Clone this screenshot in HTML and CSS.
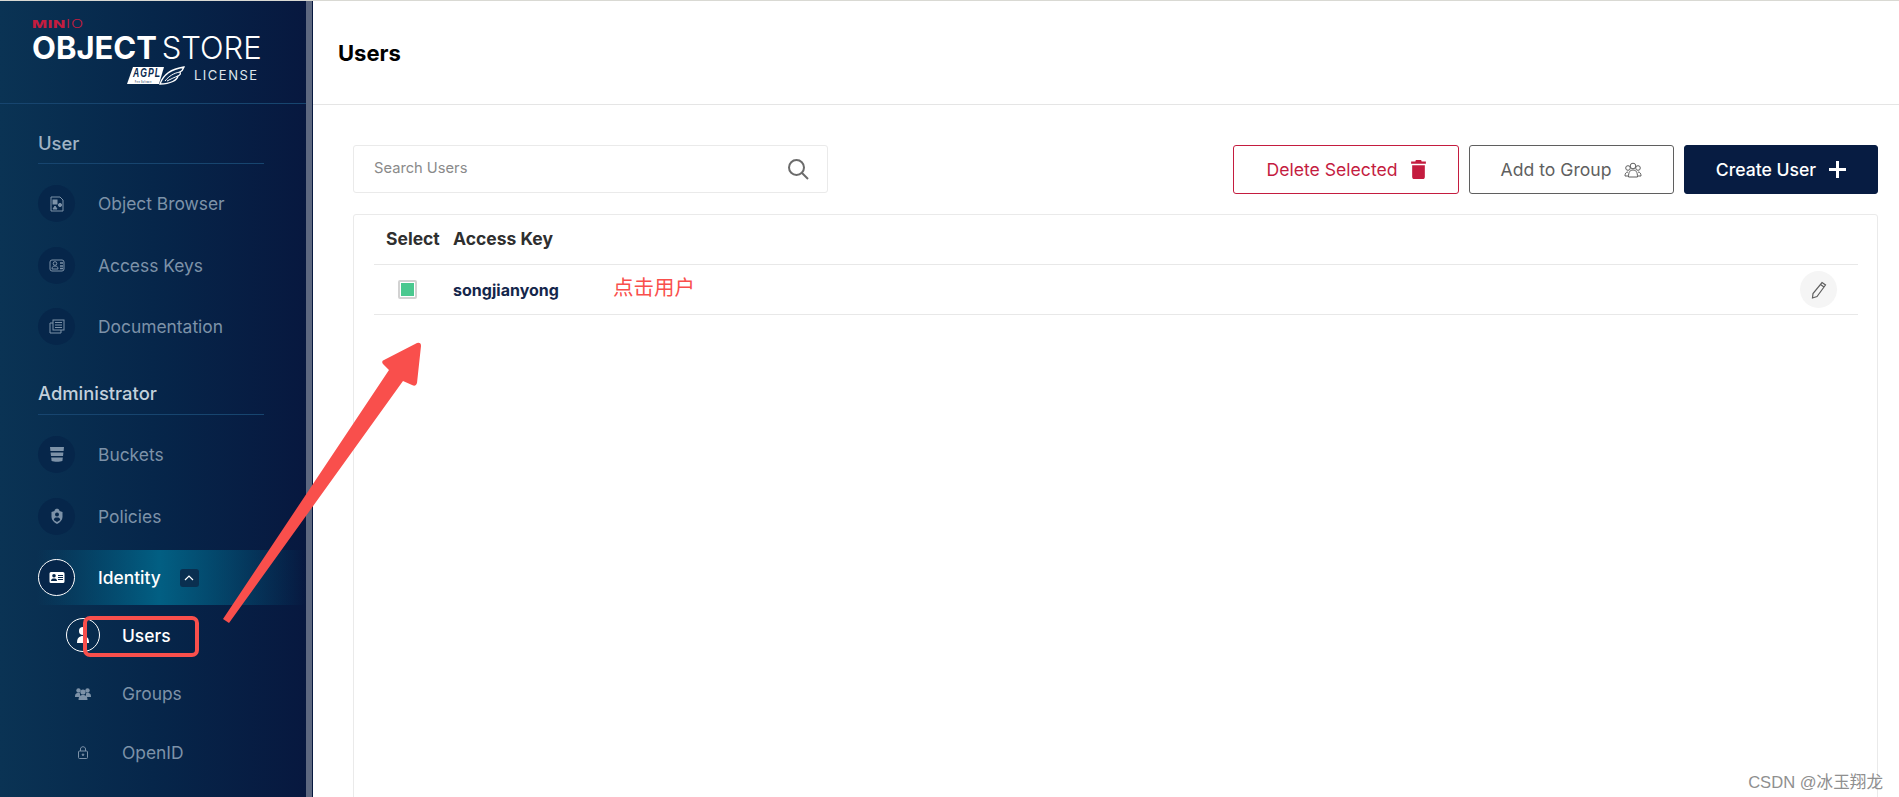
FILE: index.html
```html
<!DOCTYPE html>
<html lang="en">
<head>
    <meta charset="UTF-8">
    <meta name="viewport" content="width=device-width, initial-scale=1.0">
    <title>Users</title>
    <link rel="stylesheet" href="styles.css">
</head>
<body>
    <div class="app">
        <aside class="sidebar">
            <div class="logo">
                <div class="logo-minio"><b>MIN</b>IO</div>
                <div class="logo-name"><b>OBJECT</b> STORE</div>
                <div class="logo-license">
                    <svg class="agpl" width="58" height="19" viewBox="0 0 58 19">
                        <path d="M6 1H37L32 18H0Z" fill="#fff"/>
                        <text x="6" y="11" class="agpl-text" textLength="28" lengthAdjust="spacingAndGlyphs">AGPL</text>
                        <text x="8" y="16.500" class="agpl-small" textLength="17" lengthAdjust="spacingAndGlyphs">Free Software</text>
                        <path d="M33 18C36 9 44 3 57 1C56 4 55 5 53 6C54 8 53 9 51 10C50 14 44 18 33 18Z" fill="#0a2a50" stroke="#fff" stroke-width="1.300"/>
                        <path d="M38 15C42 10 47 7 53 6M40 15C44 13 48 11 51 10" fill="none" stroke="#fff"/>
                    </svg>
                    <span>LICENSE</span>
                </div>
            </div>

            <h3 class="nav-title dim">User</h3>
            <div class="nav-list">
                <a class="nav-item">
                    <span class="nav-icon">
                        <svg width="14" height="16" viewBox="0 0 14 16" fill="none" stroke="currentColor"><path d="M1 1H10L13 4V15H1Z"/><rect x="3" y="4" width="4" height="4" fill="currentColor"/><circle cx="10" cy="9" r="1.600" fill="currentColor"/><path d="M3 13L5 10L7 13Z" fill="currentColor"/></svg>
                    </span>
                    Object Browser
                </a>
                <a class="nav-item">
                    <span class="nav-icon">
                        <svg width="16" height="14" viewBox="0 0 16 14" fill="none" stroke="currentColor"><rect x="1" y="2" width="14" height="11" rx="2"/><circle cx="6" cy="5.500" r="1.800"/><path d="M3 11C3 9 4 8 6 8C8 8 9 9 9 11Z"/><path d="M11 5H14M11 8H14M11 10.500H14" stroke-width="1.400"/></svg>
                    </span>
                    Access Keys
                </a>
                <a class="nav-item">
                    <span class="nav-icon">
                        <svg width="16" height="15" viewBox="0 0 16 15" fill="none" stroke="currentColor"><rect x="4" y="1" width="11" height="10"/><path d="M6 3.500H13M6 6H13M6 8.500H13"/><path d="M4 4H1V14H12V11"/></svg>
                    </span>
                    Documentation
                </a>
            </div>

            <h3 class="nav-title">Administrator</h3>
            <div class="nav-list">
                <a class="nav-item">
                    <span class="nav-icon">
                        <svg width="16" height="15" viewBox="0 0 16 15" fill="currentColor"><path d="M1 0H15L14.600 4H1.400Z"/><path d="M1.600 5.500H14.400L14 9H2Z"/><path d="M2.200 10.500H13.800L13.400 14C11 15 5 15 2.600 14Z"/></svg>
                    </span>
                    Buckets
                </a>
                <a class="nav-item">
                    <span class="nav-icon">
                        <svg width="12" height="16" viewBox="0 0 12 16" fill="currentColor"><path d="M3.500 3C3.500 0 8.500 0 8.500 3L11.500 4V9C11.500 12 9 14.500 6 16C3 14.500 .5 12 .5 9V4Z"/><circle cx="6" cy="6.500" r="2" fill="#06264a"/><path d="M2.800 12C3 10 4 9.500 6 9.500C8 9.500 9 10 9.200 12L6 14Z" fill="#06264a"/></svg>
                    </span>
                    Policies
                </a>
                <a class="nav-item nav-active">
                    <span class="nav-icon">
                        <svg width="16" height="13" viewBox="0 0 16 13" fill="currentColor"><path fill-rule="evenodd" d="M2 1H14A1.500 1.500 0 0 1 15.500 2.500V10.500A1.500 1.500 0 0 1 14 12H2A1.500 1.500 0 0 1 .5 10.500V2.500A1.500 1.500 0 0 1 2 1ZM9 4V5H14V4ZM9 6V7H14V6ZM9 8V9H14V8Z"/><circle cx="5" cy="4.800" r="1.800" fill="#06264a"/><path d="M2 10C2 8 3.500 7.500 5 7.500C6.500 7.500 8 8 8 10Z" fill="#06264a"/></svg>
                    </span>
                    Identity
                    <span class="nav-toggle">
                        <svg width="10" height="6" viewBox="0 0 10 6" fill="none" stroke="#fff" stroke-width="1.200"><path d="M1 5L5 1L9 5"/></svg>
                    </span>
                </a>
            </div>
            <div class="sub-list">
                <a class="sub-item sub-active">
                    <span class="sub-icon">
                        <svg width="14" height="18" viewBox="0 0 14 18" fill="#fff"><circle cx="7" cy="5" r="4"/><path d="M1 17C1 12 3 10 7 10C11 10 13 12 13 17Z"/></svg>
                    </span>
                    Users
                </a>
                <a class="sub-item">
                    <span class="sub-icon">
                        <svg width="16" height="12" viewBox="0 0 16 12" fill="currentColor"><circle cx="3.500" cy="2.500" r="2.200"/><circle cx="12.500" cy="2.500" r="2.200"/><circle cx="8" cy="4" r="2.600"/><path d="M0 8C0 5.500 2 5 3.500 5C4.500 5 5 5.300 5 5.300V9H0Z"/><path d="M16 8C16 5.500 14 5 12.500 5C11.500 5 11 5.300 11 5.300V9H16Z"/><path d="M3.500 12C3.500 8 5.500 7 8 7C10.500 7 12.500 8 12.500 12Z"/></svg>
                    </span>
                    Groups
                </a>
                <a class="sub-item">
                    <span class="sub-icon">
                        <svg width="10" height="13" viewBox="0 0 10 13" fill="none" stroke="currentColor"><rect x=".5" y="5" width="9" height="7.500" rx="1"/><path d="M2.500 5V3C2.500 0 7.500 0 7.500 3V5"/><circle cx="5" cy="8.700" r=".8" fill="currentColor"/></svg>
                    </span>
                    OpenID
                </a>
            </div>
        </aside>
        <div class="scrollbar"></div>

        <main class="main">
            <header class="page-header">
                <h1>Users</h1>
            </header>
            <div class="content">
                <div class="toolbar">
                    <div class="search-box">
                        <span>Search Users</span>
                        <svg width="22" height="22" viewBox="0 0 22 22" fill="none" stroke="#6b6b6b" stroke-width="2"><circle cx="9.500" cy="9.500" r="7.500"/><path d="M15 15L21 21"/></svg>
                    </div>
                    <div class="actions">
                        <button class="btn btn-delete">Delete Selected
                            <svg width="15" height="19" viewBox="0 0 14 18" fill="#c41c3f"><path d="M4.500 0H9.500L10 1.500H14V3.500H0V1.500H4Z"/><path d="M1 5H13V16C13 17 12.300 18 11 18H3C1.700 18 1 17 1 16Z"/></svg>
                        </button>
                        <button class="btn btn-group">Add to Group
                            <svg width="18" height="16" viewBox="0 0 18 16" fill="none" stroke="#5f5f5f"><circle cx="9" cy="4" r="2.800"/><circle cx="4" cy="6" r="2.300"/><circle cx="14" cy="6" r="2.300"/><path d="M4.500 15C4.500 10 6 8 9 8C12 8 13.500 10 13.500 15Z"/><path d="M4 10C2 10 1 11.500 1 14H4M14 10C16 10 17 11.500 17 14H14"/></svg>
                        </button>
                        <button class="btn btn-create">Create User
                            <svg width="17" height="17" viewBox="0 0 17 17" fill="none" stroke="#fff" stroke-width="3"><path d="M8.500 0V17M0 8.500H17"/></svg>
                        </button>
                    </div>
                </div>

                <div class="table-box">
                    <div class="table-row table-head">
                        <div class="col-select">Select</div>
                        <div class="col-key">Access Key</div>
                    </div>
                    <div class="table-row">
                        <div class="col-select"><span class="checkbox"></span></div>
                        <div class="col-key user-name">songjianyong</div>
                        <button class="edit-btn">
                            <svg width="16" height="18" viewBox="0 0 16 18" fill="none" stroke="#5f5f5f" stroke-width="1.200"><path d="M11 1.500L14.500 4L6 15.500L1.500 17L2 12.500Z"/><path d="M9.500 3.500L13 6"/></svg>
                        </button>
                    </div>
                </div>
            </div>
        </main>
    </div>

    <!-- annotations drawn on top of the screenshot -->
    <div class="note-box"></div>
    <div class="note-text">点击用户</div>
    <svg class="note-arrow" width="1899" height="797" viewBox="0 0 1899 797">
        <path d="M223 619L389 370L383 364Q381 361 384 360L417 343Q421 342 421 346L417 383Q416 387 412 385L403 381L229 623Z" fill="#f94f4c"/>
    </svg>
    <div class="watermark">CSDN @冰玉翔龙</div>
</body>
</html>
```

FILE: styles.css
```css
html, body {
    margin: 0;
    height: 797px;
    overflow: hidden;
}

body {
    font-family: Inter, "Noto Sans CJK SC", sans-serif;
    background: #fff;
    color: #1f1f1f;
    position: relative;
}

.app {
    display: flex;
    height: 796px;
    border-top: 1px solid #d9d9d3;
}

/* sidebar */
.sidebar {
    width: 306px;
    flex: none;
    background: linear-gradient(90deg, #0a3354 0%, #06264a 50%, #07183f 100%);
    color: #7d92a8;
    overflow: hidden;
}

.scrollbar {
    width: 6px;
    flex: none;
    background: #5d6880;
    border-right: 1px solid #07183f;
}

.logo {
    height: 103px;
    padding: 18px 0 0 32px;
    box-sizing: border-box;
    border-bottom: 1px solid #17456f;
    color: #fff;
}

.logo-minio {
    font-size: 11px;
    line-height: 10px;
    letter-spacing: .5px;
    color: #c41c3f;
    font-weight: 300;
    transform: scaleX(1.45);
    transform-origin: left;
}

.logo-minio b {
    font-weight: 800;
}

.logo-name {
    font-size: 31px;
    line-height: 32px;
    font-weight: 300;
    word-spacing: -4px;
    white-space: nowrap;
    margin-top: 3px;
}

.logo-name b {
    font-weight: 700;
}

.logo-license {
    display: flex;
    align-items: center;
    margin-top: 0;
    padding-left: 95px;
    font-size: 13px;
    letter-spacing: 1.500px;
    color: #dfe6ec;
}

.agpl {
    margin-right: 9px;
    margin-top: 2px;
}

.agpl-text {
    font-family: "Liberation Sans", sans-serif;
    font-size: 13px;
    font-style: italic;
    font-weight: bold;
    fill: #0a2a50;
}

.agpl-small {
    font-family: "Liberation Sans", sans-serif;
    font-size: 4px;
    font-weight: bold;
    fill: #0a2a50;
}

.nav-title {
    margin: 0 42px 0 38px;
    height: 70px;
    box-sizing: border-box;
    border-bottom: 1px solid #17456f;
    padding-top: 36px;
    font-size: 18.400px;
    line-height: 24px;
    font-weight: 500;
    color: #c3d0db;
}

.nav-title.dim {
    height: 60px;
    padding-top: 27px;
    color: #a0b3c4;
}

.nav-list {
    display: flex;
    flex-direction: column;
    gap: 24.500px;
    padding: 21px 0 0 38px;
}

.nav-item {
    display: flex;
    align-items: center;
    height: 37px;
    font-size: 17.400px;
    font-weight: 400;
}

.nav-icon {
    width: 37px;
    height: 37px;
    flex: none;
    margin-right: 23px;
    border-radius: 50%;
    background: #06264a;
    display: flex;
    align-items: center;
    justify-content: center;
    box-sizing: border-box;
}

.nav-active {
    color: #fff;
    font-weight: 500;
    position: relative;
    margin: -9px 0 0 -38px;
    height: 55px;
    padding-left: 38px;
    background: linear-gradient(90deg, transparent 12%, #025f83 52%, transparent 100%);
}

.nav-active .nav-icon {
    border: 1.500px solid #fff;
    color: #fff;
}

.nav-toggle {
    width: 19px;
    height: 18px;
    margin-left: 19px;
    border-radius: 3px;
    background: #0a2f50;
    display: flex;
    align-items: center;
    justify-content: center;
}

.sub-list {
    display: flex;
    flex-direction: column;
    gap: 24.500px;
    padding: 13px 0 0 66px;
}

.sub-item {
    display: flex;
    align-items: center;
    height: 34px;
    font-size: 17.400px;
}

.sub-icon {
    width: 34px;
    height: 34px;
    flex: none;
    margin-right: 22px;
    border-radius: 50%;
    display: flex;
    align-items: center;
    justify-content: center;
    box-sizing: border-box;
}

.sub-active {
    color: #fff;
    font-weight: 500;
}

.sub-active .sub-icon {
    border: 1.500px solid #fff;
}

/* main area */
.main {
    flex: 1;
    min-width: 0;
}

.page-header {
    height: 104px;
    box-sizing: border-box;
    border-bottom: 1px solid #e5e5e5;
    padding: 0 0 0 25px;
    display: flex;
    align-items: center;
}

.page-header h1 {
    margin: 0;
    font-size: 22px;
    font-weight: 700;
    color: #000;
}

.content {
    padding: 40px 21px 0 40px;
}

.toolbar {
    display: flex;
    justify-content: space-between;
    align-items: flex-start;
}

.search-box {
    width: 475px;
    height: 48px;
    box-sizing: border-box;
    border: 1px solid #eaeaea;
    border-radius: 3px;
    display: flex;
    align-items: center;
    justify-content: space-between;
    padding: 0 18px 0 20px;
    font-size: 14.700px;
    color: #8a8a8a;
}

.search-box span {
    margin-top: -3px;
}

.actions {
    display: flex;
    gap: 10px;
}

.btn {
    height: 49px;
    box-sizing: border-box;
    border-radius: 3px;
    display: flex;
    align-items: center;
    justify-content: center;
    gap: 13px;
    font-family: inherit;
    font-size: 17.600px;
    background: #fff;
    padding: 0;
}

.btn-delete {
    width: 226px;
    border: 1px solid #c41c3f;
    color: #c41c3f;
}

.btn-group {
    width: 205px;
    border: 1px solid #5f5f5f;
    color: #5f5f5f;
}

.btn-create {
    width: 194px;
    border: 1px solid #071c42;
    background: #071c42;
    color: #fff;
    font-weight: 500;
}

.table-box {
    margin-top: 20px;
    height: 600px;
    border: 1px solid #eaeaea;
    border-radius: 3px;
    padding: 0 19px 0 20px;
}

.table-row {
    height: 50px;
    box-sizing: border-box;
    display: flex;
    align-items: center;
    border-bottom: 1px solid #e8e8e8;
    position: relative;
}

.col-select {
    width: 79px;
    box-sizing: border-box;
    padding-left: 12px;
}

.table-head {
    font-size: 17.500px;
    font-weight: 700;
    color: #2f2f2f;
    padding-bottom: 2px;
}

.checkbox {
    display: block;
    width: 15px;
    height: 15px;
    margin-left: 12px;
    border: 2px solid #d2d2d2;
    box-shadow: inset 0 0 0 1px #fff;
    background: #4ac88f;
    border-radius: 2px;
}

.user-name {
    font-size: 16px;
    font-weight: 700;
    color: #14264b;
}

.edit-btn {
    position: absolute;
    right: 21px;
    top: 6px;
    width: 37px;
    height: 37px;
    border: none;
    padding: 0;
    border-radius: 50%;
    background: #f5f5f5;
    display: flex;
    align-items: center;
    justify-content: center;
}

/* annotations */
.note-box {
    position: absolute;
    left: 83px;
    top: 616px;
    width: 116px;
    height: 41px;
    box-sizing: border-box;
    border: 4px solid #f94f4c;
    border-radius: 7px;
}

.note-text {
    position: absolute;
    left: 613px;
    top: 272px;
    font-family: "Noto Sans CJK SC", sans-serif;
    font-size: 20.500px;
    line-height: 28px;
    color: #f94f4c;
}

.note-arrow {
    position: absolute;
    left: 0;
    top: 0;
}

.watermark {
    position: absolute;
    right: 16px;
    top: 769px;
    font-family: "Liberation Sans", "Noto Sans CJK SC", sans-serif;
    font-size: 16.600px;
    color: #8f8f8f;
}
```
